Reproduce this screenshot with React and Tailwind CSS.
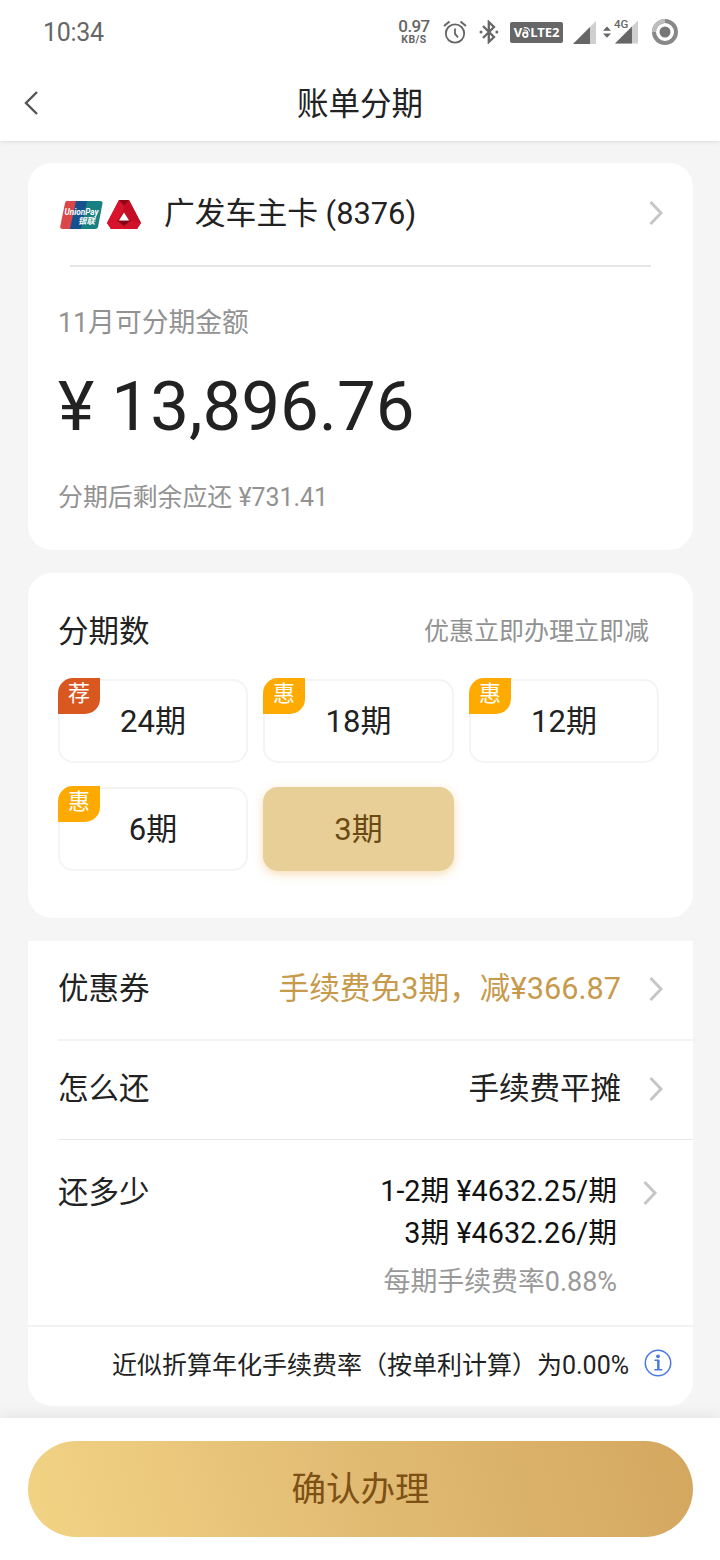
import React, { useState } from 'react'

const PLANS = [
  { term: 24, tag: '荐' },
  { term: 18, tag: '惠' },
  { term: 12, tag: '惠' },
  { term: 6, tag: '惠' },
  { term: 3 }
]

function Chevron({ className = '' }) {
  return (
    <svg className={`shrink-0 ${className}`} width="16" height="26" viewBox="0 0 16 26" fill="none">
      <path d="M1.500 2l10.500 11L1.500 24" stroke="#c6c6c6" strokeWidth="3" />
    </svg>
  )
}

function StatusBar() {
  return (
    <div className="flex h-[64px] items-center pl-[43px] pr-[42px] text-[#666]">
      <span className="mt-[1px] text-[25px] leading-[30px] tracking-[-0.3px]">10:34</span>
      <div className="ml-auto flex items-center">
        <div className="flex w-[32px] flex-col items-center font-medium">
          <span className="text-[17px] leading-[15px] tracking-[-0.6px]">0.97</span>
          <span className="text-[10.500px] font-bold leading-[11px] tracking-[0.4px]">KB/S</span>
        </div>

        {/* Alarm */}
        <svg className="ml-[13px]" width="24" height="24" viewBox="0 0 24 24" fill="none" stroke="#666" strokeWidth="1.8">
          <circle cx="12" cy="13.5" r="9.2" />
          <path d="M12 8.5v5.3l3 3.6" />
          <path d="M1 6l5.500-4.600M23 6l-5.500-4.600" strokeWidth="2" />
        </svg>

        {/* Bluetooth */}
        <svg className="ml-[12px]" width="20" height="24" viewBox="0 0 20 24" fill="none" stroke="#666" strokeWidth="2.300">
          <path d="M4 6l11 11-5.200 5V2L15 7 4 18" />
          <circle cx="2" cy="12" r="1.500" fill="#666" stroke="none" />
          <circle cx="17.800" cy="12" r="1.500" fill="#666" stroke="none" />
        </svg>

        <div className="ml-[11px] flex h-[21px] w-[53px] items-center justify-center rounded-[2px] bg-[#666] font-['Open_Sans'] text-[13px] font-bold leading-none text-white">
          <span>V</span>
          <svg width="8" height="14" viewBox="0 0 8 14" fill="none" stroke="#fff">
            <circle cx="3.300" cy="9.800" r="2.300" strokeWidth="1.800" />
            <path d="M1.500 5.200c2.300-.8 4 .4 4.400 2.600M1.800 2.800c3-.7 5.300.9 5.800 3.600" strokeWidth="1.100" />
          </svg>
          <span className="tracking-[-0.1px]">LTE2</span>
        </div>

        {/* Signal strength, one per SIM */}
        <svg className="ml-[10px]" width="23" height="23" viewBox="0 0 23 23">
          <path d="M23 0v23H0z" fill="#cfcfcf" />
          <path d="M17 6v17H0z" fill="#666" />
        </svg>
        <svg className="ml-[7px] overflow-visible" width="36" height="26" viewBox="0 0 36 26">
          <path d="M0 11.800l4-4.300 4 4.300zM0 14.400h8l-4 4.300z" fill="#666" />
          <path d="M35 1.500v23H12z" fill="#cfcfcf" />
          <path d="M29 7.500v17H12z" fill="#666" />
          <text x="11" y="8.500" fontSize="11.500" fontWeight="500" fontFamily="Roboto, sans-serif" fill="#666" stroke="#fff" strokeWidth="2" paintOrder="stroke">
            4G
          </text>
        </svg>

        <svg className="ml-[13px]" width="26" height="26" viewBox="0 0 26 26" fill="none">
          <circle cx="13" cy="13" r="11" stroke="#888" strokeWidth="4" />
          <path d="M2 13A11 11 0 0 1 13 2" stroke="#bdbdbd" strokeWidth="4" />
          <circle cx="13" cy="13" r="5.500" fill="#777" />
        </svg>
      </div>
    </div>
  )
}

function UnionPayLogo() {
  return (
    <svg className="mt-[2px] overflow-visible" width="43" height="28" viewBox="0 0 43 28">
      <path d="M7 0h12l-6 28H3Q-.5 28 .3 25L5 2Q5.500 0 7 0z" fill="#d9474b" />
      <path d="M16 0h14l-6 28H10z" fill="#16508f" />
      <path d="M27 0h13q3 0 2.500 2.500L38 26q-.5 2-3 2H21z" fill="#178080" />
      <text x="4.500" y="13.500" fontSize="8.500" fontWeight="700" fontStyle="italic" fontFamily="Roboto, sans-serif" fill="#fff" textLength="34" lengthAdjust="spacingAndGlyphs">
        UnionPay
      </text>
      <text x="18" y="22.500" fontSize="8.500" fontWeight="700" fontStyle="italic" fontFamily="'Noto Sans CJK SC', sans-serif" fill="#fff">
        银联
      </text>
    </svg>
  )
}

function BankLogo() {
  return (
    <svg width="34" height="30" viewBox="0 0 34 30">
      <path d="M12 0h10l12 23-4 6H4l-4-6z" fill="#c90f26" />
      <path d="M12 0L0 23l11-3 6-12z" fill="#d8132c" />
      <path d="M12 0h10l-4.500 5.500z" fill="#8e0714" />
      <path d="M17.500 5.500L22 0l12 23-10-3-7-12z" fill="#c20d24" />
      <path d="M0 23l11-3 8 9H4z" fill="#d8132c" />
      <path d="M10 20.500h14l-7 5.500z" fill="#7f0611" />
      <path d="M34 23l-10-2.500-7 5.500 3 3h10z" fill="#d0122a" />
      <path d="M17 12.500l5 8H12z" fill="#fff" />
    </svg>
  )
}

function PlanButton({ plan, selected, onSelect }) {
  return (
    <button
      onClick={onSelect}
      className={`relative h-[84px] rounded-[15px] pt-[1px] text-[31px] leading-[40px] ${
        selected
          ? 'bg-[#e8cf98] text-[#6b4a12] shadow-[0_3px_10px_rgba(240,190,110,0.5)]'
          : 'border-2 border-[#f4f4f4] bg-white text-[#222]'
      }`}
    >
      {plan.tag && (
        <span
          className={`absolute -left-[2px] -top-[3px] h-[36px] w-[42px] rounded-br-[15px] rounded-tl-[15px] text-[22px] leading-[31px] text-white ${
            plan.tag === '荐' ? 'bg-[#d8581f]' : 'bg-[#ffaa00]'
          }`}
        >
          {plan.tag}
        </span>
      )}
      {plan.term}期
    </button>
  )
}

export default function App() {
  const [term, setTerm] = useState(3)

  return (
    <div className="flex h-[1560px] w-[720px] flex-col bg-[#f5f5f5] font-[Roboto,'Noto_Sans_CJK_SC',sans-serif] text-[#222]">
      <header className="h-[141px] shrink-0 bg-white shadow-[0_1px_4px_rgba(0,0,0,0.1)]">
        <StatusBar />
        <div className="grid h-[77px] grid-cols-3 items-center">
          <button className="pl-[24px]">
            <svg width="15" height="24" viewBox="0 0 15 24" fill="none">
              <path d="M13 1L2 12l11 11" stroke="#555" strokeWidth="2.400" />
            </svg>
          </button>
          <h1 className="pt-[5px] text-center text-[31.500px] leading-[40px]">账单分期</h1>
        </div>
      </header>

      <main className="flex flex-1 flex-col gap-[23px] pl-[28px] pr-[27px] pt-[22px]">
        {/* Card and amount */}
        <section className="h-[387px] rounded-[24px] bg-white">
          <div className="flex h-[102px] items-center pl-[32px] pr-[28px]">
            <UnionPayLogo />
            <div className="ml-[4px] mt-[1px]">
              <BankLogo />
            </div>
            <span className="ml-[23px] text-[30.800px] leading-[40px]">广发车主卡 (8376)</span>
            <Chevron className="-mt-[2px] ml-auto" />
          </div>
          <div className="ml-[42px] mr-[42px] h-[2px] bg-[#e6e6e6]" />
          <div className="pl-[30px]">
            <p className="mt-[38px] text-[26.800px] leading-[36px] text-[#929292]">11月可分期金额</p>
            <p className="mt-[21px] text-[69px] leading-[90px]">¥ 13,896.76</p>
            <p className="mt-[28px] text-[24.900px] leading-[36px] text-[#929292]">分期后剩余应还 ¥731.41</p>
          </div>
        </section>

        {/* Terms */}
        <section className="h-[345px] rounded-[24px] bg-white pl-[30px] pr-[34px] pt-[39px]">
          <div className="flex items-center justify-between pr-[10px]">
            <h2 className="text-[30.500px] leading-[40px]">分期数</h2>
            <span className="text-[25px] leading-[40px] text-[#929292]">优惠立即办理立即减</span>
          </div>
          <div className="mt-[27px] grid grid-cols-[190px_191px_190px] gap-x-[15px] gap-y-[24px]">
            {PLANS.map((plan) => (
              <PlanButton
                key={plan.term}
                plan={plan}
                selected={plan.term === term}
                onSelect={() => setTerm(plan.term)}
              />
            ))}
          </div>
        </section>

        {/* Repayment details */}
        <section className="h-[465px] rounded-b-[24px] bg-white">
          <div className="ml-[30px] flex h-[100px] items-center border-b-2 border-[#f3f3f3] pr-[28px] pb-[3px] text-[30.500px] leading-[40px]">
            <span>优惠券</span>
            <span className="ml-auto text-[30.700px] text-[#c79a4b]">手续费免3期，减¥366.87</span>
            <Chevron className="ml-[28px]" />
          </div>
          <div className="ml-[30px] flex h-[99px] items-center border-b border-[#e8e8e8] pr-[28px] pb-[3px] text-[30.500px] leading-[40px]">
            <span>怎么还</span>
            <span className="ml-auto">手续费平摊</span>
            <Chevron className="ml-[28px]" />
          </div>
          <div className="flex h-[185px] items-start pl-[30px] pr-[34px] pt-[33px]">
            <span className="text-[30.500px] leading-[40px]">还多少</span>
            <div className="ml-auto text-right text-[28.800px] leading-[42px] text-[#111]">
              <p className="-mt-[3px]">1-2期 ¥4632.25/期</p>
              <p>3期 ¥4632.26/期</p>
              <p className="mt-[7px] text-[26.900px] text-[#999]">每期手续费率0.88%</p>
            </div>
            <Chevron className="ml-[26px] mt-[7px]" />
          </div>
          <div className="flex h-[81px] items-center justify-end border-t-2 border-[#f2f2f2] pr-[21px] pb-[4px] text-[25px] leading-[36px]">
            <span className="mt-[2px]">近似折算年化手续费率（按单利计算）为0.00%</span>
            <svg className="mb-[4px] ml-[15px]" width="28" height="28" viewBox="0 0 28 28" fill="none" stroke="#4a78e0">
              <circle cx="14" cy="14" r="12.700" strokeWidth="1.500" />
              <circle cx="14" cy="7.300" r="1.900" fill="#4a78e0" stroke="none" />
              <path d="M10.500 11.200h4.200v9.300M10.300 20.700h8" strokeWidth="1.400" />
              <path d="M14.200 11v9.500" strokeWidth="2.200" />
            </svg>
          </div>
        </section>
      </main>

      <footer className="h-[142px] shrink-0 bg-white pl-[28px] pr-[27px] pt-[23px] shadow-[0_-2px_14px_rgba(0,0,0,0.08)]">
        <button className="h-[96px] w-full rounded-full bg-linear-[75deg,#f2d384,#e3bd75_45%,#d4a75f] text-[34.500px] leading-[48px] text-[#7d5015]">
          确认办理
        </button>
      </footer>
    </div>
  )
}
